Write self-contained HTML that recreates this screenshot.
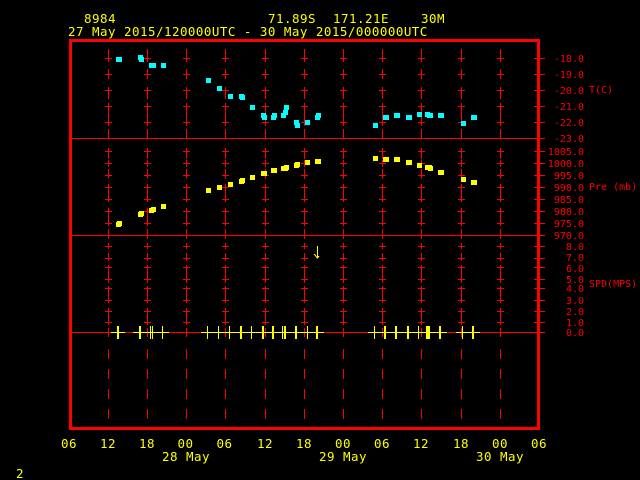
<!DOCTYPE html>
<html>
<head>
<meta charset="utf-8">
<style>
html,body{margin:0;padding:0;background:#000;width:640px;height:480px;overflow:hidden}
svg{display:block;position:absolute;left:0;top:0}
text{font-family:"DejaVu Sans Mono",monospace;white-space:pre}
.y{fill:#ff0;font-size:12.5px;letter-spacing:.47px}
.r{fill:#f00;font-size:10px}
.e{text-anchor:end}
.pts rect{width:5px;height:5px}
</style>
</head>
<body>
<svg width="640" height="480" viewBox="0 0 640 480" xmlns="http://www.w3.org/2000/svg">
<rect width="640" height="480" fill="#000"/>
<defs>
<path id="col" fill="none" stroke="#f00" stroke-width="1" shape-rendering="crispEdges" d="M0 49V62M0 69V79M0 87V99M0 103V126M0 129V138M0 148V159M0 160V167M0 169V179M0 184V202M0 208V226M0 229V239M0 243V249M0 253V261M0 265V283M0 286V303M0 308V325M0 328V337M0 349V359M0 369V379M0 389V399M0 409V419
M-3.5 58.5H3.5M-3.5 74.5H3.5M-3.5 90.5H3.5M-3.5 106.5H3.5M-3.5 122.5H3.5
M-3.5 151.5H3.5M-3.5 163.5H3.5M-3.5 175.5H3.5M-3.5 187.5H3.5M-3.5 199.5H3.5M-3.5 211.5H3.5M-3.5 223.5H3.5
M-3.5 246.5H3.5M-3.5 258.5H3.5M-3.5 267.5H3.5M-3.5 279.5H3.5M-3.5 288.5H3.5M-3.5 300.5H3.5M-3.5 311.5H3.5M-3.5 322.5H3.5"/>
</defs>
<use href="#col" x="108.5"/>
<use href="#col" x="147.5"/>
<use href="#col" x="186.5"/>
<use href="#col" x="225.5"/>
<use href="#col" x="265.5"/>
<use href="#col" x="304.5"/>
<use href="#col" x="343.5"/>
<use href="#col" x="382.5"/>
<use href="#col" x="421.5"/>
<use href="#col" x="461.5"/>
<use href="#col" x="500.5"/>

<!-- right ticks and main lines -->
<path fill="none" stroke="#f00" stroke-width="1" shape-rendering="crispEdges" d="M534 58.5H545M534 74.5H545M534 90.5H545M534 106.5H545M534 122.5H545
M534 151.5H545M534 163.5H545M534 175.5H545M534 187.5H545M534 199.5H545M534 211.5H545M534 223.5H545
M534 246.5H545M534 258.5H545M534 267.5H545M534 279.5H545M534 288.5H545M534 300.5H545M534 311.5H545M534 322.5H545
M72 138.5H545M72 235.5H545M72 332.5H545"/>

<!-- frame -->
<rect x="70.5" y="40.5" width="468" height="388" fill="none" stroke="#f00" stroke-width="3" shape-rendering="crispEdges"/>

<!-- cyan temperature points -->
<g class="pts" fill="#0ff" shape-rendering="crispEdges">
<rect x="116" y="57" width="4" height="4"/><rect x="117" y="57" width="4" height="4"/>
<rect x="138" y="55" width="4" height="4"/><rect x="139" y="57" width="4" height="4"/>
<rect x="149" y="63" width="4" height="4"/><rect x="151" y="63" width="4" height="4"/>
<rect x="161" y="63" width="4" height="4"/>
<rect x="206" y="78" width="4" height="4"/>
<rect x="217" y="86" width="4" height="4"/>
<rect x="228" y="94" width="4" height="4"/>
<rect x="239" y="94" width="4" height="4"/><rect x="240" y="95" width="4" height="4"/>
<rect x="250" y="105" width="4" height="4"/>
<rect x="261" y="113" width="4" height="4"/><rect x="262" y="115" width="4" height="4"/>
<rect x="271" y="115" width="4" height="4"/><rect x="272" y="113" width="4" height="4"/>
<rect x="281" y="113" width="4" height="4"/><rect x="283" y="110" width="4" height="4"/><rect x="284" y="105" width="4" height="4"/>
<rect x="294" y="120" width="4" height="4"/><rect x="295" y="123" width="4" height="4"/>
<rect x="305" y="120" width="4" height="4"/>
<rect x="315" y="115" width="4" height="4"/><rect x="316" y="113" width="4" height="4"/>
<rect x="373" y="123" width="4" height="4"/>
<rect x="383" y="115" width="4" height="4"/><rect x="384" y="115" width="4" height="4"/>
<rect x="394" y="113" width="4" height="4"/><rect x="395" y="113" width="4" height="4"/>
<rect x="406" y="115" width="4" height="4"/><rect x="407" y="115" width="4" height="4"/>
<rect x="417" y="112" width="4" height="4"/>
<rect x="425" y="112" width="4" height="4"/><rect x="427" y="113" width="4" height="4"/><rect x="428" y="113" width="4" height="4"/>
<rect x="438" y="113" width="4" height="4"/><rect x="439" y="113" width="4" height="4"/>
<rect x="461" y="121" width="4" height="4"/>
<rect x="471" y="115" width="4" height="4"/><rect x="472" y="115" width="4" height="4"/>
</g>

<!-- yellow pressure points -->
<g class="pts" fill="#ff0" shape-rendering="crispEdges">
<rect x="116" y="222" width="4" height="4"/><rect x="117" y="221" width="4" height="4"/>
<rect x="138" y="212" width="4" height="4"/><rect x="139" y="211" width="4" height="4"/>
<rect x="149" y="208" width="4" height="4"/><rect x="151" y="207" width="4" height="4"/>
<rect x="161" y="204" width="4" height="4"/>
<rect x="206" y="188" width="4" height="4"/>
<rect x="217" y="185" width="4" height="4"/>
<rect x="228" y="182" width="4" height="4"/>
<rect x="239" y="179" width="4" height="4"/><rect x="240" y="178" width="4" height="4"/>
<rect x="250" y="175" width="4" height="4"/>
<rect x="261" y="171" width="4" height="4"/><rect x="262" y="171" width="4" height="4"/>
<rect x="271" y="168" width="4" height="4"/><rect x="272" y="168" width="4" height="4"/>
<rect x="281" y="166" width="4" height="4"/><rect x="283" y="166" width="4" height="4"/><rect x="284" y="165" width="4" height="4"/>
<rect x="294" y="163" width="4" height="4"/><rect x="295" y="162" width="4" height="4"/>
<rect x="305" y="160" width="4" height="4"/>
<rect x="315" y="159" width="4" height="4"/><rect x="316" y="159" width="4" height="4"/>
<rect x="373" y="156" width="4" height="4"/>
<rect x="383" y="157" width="4" height="4"/><rect x="384" y="157" width="4" height="4"/>
<rect x="394" y="157" width="4" height="4"/><rect x="395" y="157" width="4" height="4"/>
<rect x="406" y="160" width="4" height="4"/><rect x="407" y="160" width="4" height="4"/>
<rect x="417" y="163" width="4" height="4"/>
<rect x="425" y="165" width="4" height="4"/><rect x="427" y="165" width="4" height="4"/><rect x="428" y="166" width="4" height="4"/>
<rect x="438" y="170" width="4" height="4"/><rect x="439" y="170" width="4" height="4"/>
<rect x="461" y="177" width="4" height="4"/>
<rect x="471" y="180" width="4" height="4"/><rect x="472" y="180" width="4" height="4"/>
</g>

<!-- yellow wind bars -->
<g fill="#ff0" shape-rendering="crispEdges">
<rect x="111" y="332" width="14" height="1"/>
<rect x="133" y="332" width="36" height="1"/>
<rect x="201" y="332" width="123" height="1"/>
<rect x="368" y="332" width="79" height="1"/>
<rect x="456" y="332" width="24" height="1"/>
<rect x="117" y="326" width="2" height="13"/>
<rect x="139" y="326" width="2" height="13"/>
<rect x="150" y="326" width="1" height="13"/>
<rect x="152" y="326" width="1" height="13"/>
<rect x="162" y="326" width="1" height="13"/>
<rect x="207" y="326" width="1" height="13"/>
<rect x="218" y="326" width="1" height="13"/>
<rect x="229" y="326" width="1" height="13"/>
<rect x="240" y="326" width="2" height="13"/>
<rect x="251" y="326" width="1" height="13"/>
<rect x="262" y="326" width="2" height="13"/>
<rect x="272" y="326" width="2" height="13"/>
<rect x="282" y="326" width="1" height="13"/>
<rect x="284" y="326" width="2" height="13"/>
<rect x="295" y="326" width="2" height="13"/>
<rect x="307" y="326" width="1" height="13"/>
<rect x="316" y="326" width="2" height="13"/>
<rect x="374" y="326" width="1" height="13"/>
<rect x="384" y="326" width="2" height="13"/>
<rect x="395" y="326" width="2" height="13"/>
<rect x="407" y="326" width="2" height="13"/>
<rect x="418" y="326" width="1" height="13"/>
<rect x="426" y="326" width="4" height="13"/>
<rect x="439" y="326" width="2" height="13"/>
<rect x="462" y="326" width="1" height="13"/>
<rect x="472" y="326" width="2" height="13"/>
</g>

<!-- arrow -->
<path d="M317.5 246V258M314 254L317.5 258L319 256" fill="none" stroke="#ff0" stroke-width="1" shape-rendering="crispEdges"/>

<!-- header -->
<text class="y" x="84" y="23">8984</text>
<text class="y" x="268" y="23">71.89S</text>
<text class="y" x="333" y="23">171.21E</text>
<text class="y" x="421" y="23">30M</text>
<text class="y" x="68" y="36">27 May 2015/120000UTC - 30 May 2015/000000UTC</text>

<!-- right axis labels -->
<g class="r">
<text class="e" x="584" y="62">-18.0</text>
<text class="e" x="584" y="78">-19.0</text>
<text class="e" x="584" y="94">-20.0</text>
<text class="e" x="584" y="110">-21.0</text>
<text class="e" x="584" y="126">-22.0</text>
<text class="e" x="584" y="142">-23.0</text>
<text class="e" x="584" y="155">1005.0</text>
<text class="e" x="584" y="167">1000.0</text>
<text class="e" x="584" y="179">995.0</text>
<text class="e" x="584" y="191">990.0</text>
<text class="e" x="584" y="203">985.0</text>
<text class="e" x="584" y="215">980.0</text>
<text class="e" x="584" y="227">975.0</text>
<text class="e" x="584" y="239">970.0</text>
<text class="e" x="584" y="250">8.0</text>
<text class="e" x="584" y="261">7.0</text>
<text class="e" x="584" y="272">6.0</text>
<text class="e" x="584" y="283">5.0</text>
<text class="e" x="584" y="292">4.0</text>
<text class="e" x="584" y="304">3.0</text>
<text class="e" x="584" y="315">2.0</text>
<text class="e" x="584" y="326">1.0</text>
<text class="e" x="584" y="336">0.0</text>
<text x="589" y="93">T(C)</text>
<text x="589" y="190">Pre (mb)</text>
<text x="589" y="287">SPD(MPS)</text>
</g>

<!-- bottom axis -->
<g class="y">
<text x="61" y="448">06</text>
<text x="100" y="448">12</text>
<text x="139" y="448">18</text>
<text x="177.5" y="448">00</text>
<text x="216.5" y="448">06</text>
<text x="257" y="448">12</text>
<text x="296" y="448">18</text>
<text x="335" y="448">00</text>
<text x="374" y="448">06</text>
<text x="413" y="448">12</text>
<text x="453" y="448">18</text>
<text x="492" y="448">00</text>
<text x="531" y="448">06</text>
<text x="162" y="461">28 May</text>
<text x="319" y="461">29 May</text>
<text x="476" y="461">30 May</text>
<text x="16" y="478">2</text>
</g>
</svg>
</body>
</html>
